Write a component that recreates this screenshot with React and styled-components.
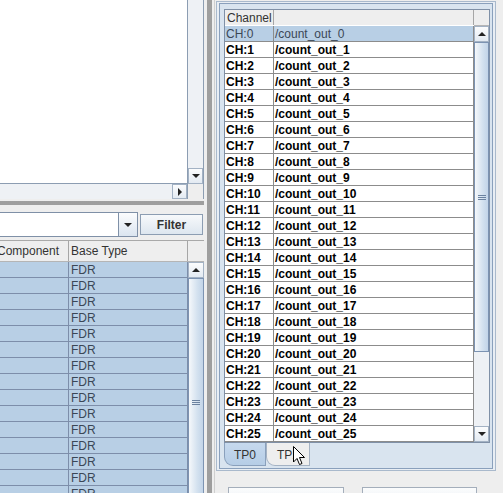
import React from "react";
import styled, { createGlobalStyle, css } from "styled-components";

const GlobalStyle = createGlobalStyle`
  html, body { margin: 0; padding: 0; background: #eeeeee; }
  body { font-family: "Liberation Sans", Arial, sans-serif; font-size: 12px; }
  * { box-sizing: border-box; }
`;

const Screen = styled.div`
  position: relative;
  width: 503px;
  height: 493px;
  overflow: hidden;
  display: flex;
  background: #eeeeee;
  color: #333;
`;

/* ---------- scrollbars ---------- */

const Triangle = styled.span`
  width: 0;
  height: 0;
  ${({ dir }) =>
    dir === "up" &&
    css`
      border-left: 4px solid transparent;
      border-right: 4px solid transparent;
      border-bottom: 4px solid #222;
    `}
  ${({ dir }) =>
    dir === "down" &&
    css`
      border-left: 4px solid transparent;
      border-right: 4px solid transparent;
      border-top: 4px solid #222;
    `}
  ${({ dir }) =>
    dir === "right" &&
    css`
      border-top: 4px solid transparent;
      border-bottom: 4px solid transparent;
      border-left: 4px solid #222;
    `}
`;

const ArrowButton = styled.div`
  flex: none;
  width: ${({ w }) => w || 15}px;
  height: ${({ h }) => h || 16}px;
  display: flex;
  align-items: center;
  justify-content: center;
  background: linear-gradient(#fbfcfd, #e3eaf2);
  border: 1px solid #a3b2c4;
`;

const Track = styled.div`
  flex: 1;
  position: relative;
  overflow: hidden;
  background: #eef1f5;
`;

const Thumb = styled.div`
  position: absolute;
  left: 0;
  right: 0;
  top: 0;
  height: ${({ h }) => h}px;
  display: flex;
  align-items: center;
  justify-content: center;
  background: linear-gradient(90deg, #f5f8fb, #d3e1ef 60%, #c2d4e8);
  border: 1px solid #7c93b2;
`;

const Grip = styled.span`
  width: 8px;
  height: 5px;
  border-top: 1px solid #6b82a0;
  border-bottom: 1px solid #6b82a0;
  position: relative;
  &::after {
    content: "";
    position: absolute;
    left: 0;
    right: 0;
    top: 1px;
    border-top: 1px solid #6b82a0;
  }
`;

const VBar = styled.div`
  width: ${({ w }) => w || 15}px;
  display: flex;
  flex-direction: column;
  background: #eeeeee;
`;

const HeaderCorner = styled.div`
  flex: none;
  height: ${({ h }) => h}px;
  background: #eeeeee;
  border-bottom: 1px solid #b5b5b5;
`;

/* ---------- left column ---------- */

const LeftColumn = styled.div`
  width: 204px;
  flex: none;
  display: flex;
  flex-direction: column;
`;

const TopScroll = styled.div`
  height: 199px;
  flex: none;
  display: grid;
  grid-template-columns: 188px 16px;
  grid-template-rows: 184px 15px;
  border-bottom: 1px solid #8c9db2;
`;

const Viewport = styled.div`
  background: #ffffff;
  border-right: 1px solid #8c9db2;
  border-bottom: 1px solid #8c9db2;
`;

const VScroll = styled.div`
  display: flex;
  flex-direction: column;
  background: #eeeeee;
  border-right: 1px solid #8c9db2;
`;

const HScroll = styled.div`
  display: flex;
  background: #eeeeee;
  border-right: 1px solid #8c9db2;
`;

const Corner = styled.div`
  background: #eeeeee;
  border-right: 1px solid #8c9db2;
`;

const dots = css`
  background-image: radial-gradient(circle, #9c9c9c 0.7px, transparent 1px);
  background-size: 2px 2px;
`;

const HDivider = styled.div`
  height: 11px;
  flex: none;
  padding: 2px 0 0;
  &::before {
    content: "";
    display: block;
    height: 4px;
    ${dots}
  }
`;

const VDivider = styled.div`
  width: 10px;
  flex: none;
  display: flex;
  justify-content: center;
  &::before {
    content: "";
    display: block;
    width: 5px;
    height: 100%;
    ${dots}
  }
`;

const FilterRow = styled.div`
  height: 30px;
  flex: none;
  display: flex;
  align-items: flex-start;
  padding-top: 2px;
`;

const ComboField = styled.div`
  width: 118px;
  height: 25px;
  background: #ffffff;
  border: 1px solid #7f90a7;
  border-left: none;
  border-right: none;
`;

const ComboButton = styled.div`
  width: 20px;
  height: 25px;
  display: flex;
  align-items: center;
  justify-content: center;
  border: 1px solid #7f90a7;
  background: linear-gradient(#fbfcfd, #dbe5f0);
`;

const FilterButton = styled.div`
  margin: 2px 0 0 2px;
  width: 63px;
  height: 21px;
  display: flex;
  align-items: center;
  justify-content: center;
  font-weight: bold;
  font-size: 12px;
  color: #333;
  border: 1px solid #8c9db2;
  background: linear-gradient(#f7f9fb, #dde6ef);
`;

const LeftTable = styled.div`
  flex: 1;
  display: flex;
  overflow: hidden;
  border-top: 1px solid #a9a9a9;
`;

const TableView = styled.div`
  flex: 1;
  overflow: hidden;
`;

const TableInner = styled.div`
  margin-left: ${({ shift }) => shift || 0}px;
`;

const HeaderRow = styled.div`
  display: flex;
  height: ${({ h }) => h}px;
  background: #eeeeee;
  border-bottom: 1px solid ${({ line }) => line || "#b5b5b5"};
`;

const HeaderCell = styled.div`
  width: ${({ w }) => w}px;
  flex: none;
  display: flex;
  align-items: center;
  padding-left: 2px;
  font-size: 12px;
  color: #333;
  border-right: 1px solid #a6a6a6;
  ${({ fill }) => fill && "flex: 1;"}
`;

const Row = styled.div`
  display: flex;
  height: 16px;
  background: ${({ selected }) => (selected ? "#b8cfe5" : "#ffffff")};
  border-bottom: 1px solid ${({ line }) => line};
`;

const Cell = styled.div`
  width: ${({ w }) => w}px;
  flex: none;
  display: flex;
  align-items: center;
  padding-left: ${({ pad }) => pad || 1}px;
  border-right: 1px solid ${({ line }) => line};
  font-size: 12px;
  white-space: nowrap;
  overflow: hidden;
  font-weight: ${({ bold }) => (bold ? "bold" : "normal")};
  color: ${({ bold }) => (bold ? "#000" : "#3b4756")};
  ${({ fill }) => fill && "flex: 1;"}
`;

/* ---------- right column ---------- */

const RightColumn = styled.div`
  width: 289px;
  flex: none;
  display: flex;
  flex-direction: column;
  border-left: 1px solid #cfcfcf;
`;

const Frame = styled.div`
  margin: 1px 0 0 1px;
  width: 280px;
  padding: 1px 2px 1px 2px;
  border: 1px solid #a9b9cc;
  background: #e9eef4;
`;

const TabPane = styled.div`
  display: flex;
  flex-direction: column;
  padding: 5px 2px 0 4px;
  border: 1px solid #8aa0bc;
  background: #d9e4ef;
`;

const ScrollPane = styled.div`
  height: 434px;
  display: flex;
  border: 1px solid #7f90a7;
  background: #ffffff;
`;

const TabRow = styled.div`
  height: 25px;
  display: flex;
  align-items: flex-start;
`;

const Tab = styled.div`
  width: ${({ w }) => w}px;
  height: 23px;
  display: flex;
  align-items: center;
  justify-content: center;
  padding-top: 1px;
  font-size: 12px;
  color: #333;
  border: 1px solid ${({ selected }) => (selected ? "#8aa0bc" : "#a5b3c4")};
  border-top: none;
  border-bottom-left-radius: 9px;
  background: ${({ selected }) =>
    selected ? "linear-gradient(#c6d9ee, #b6cde6)" : "#eeeeee"};
`;

const ButtonRow = styled.div`
  display: flex;
  gap: 18px;
  padding: 16px 0 0 13px;
`;

const BottomButton = styled.div`
  width: ${({ w }) => w}px;
  height: 24px;
  border: 1px solid #a4aebb;
  background: linear-gradient(#fbfcfd, #e6ecf2);
`;

const Cursor = styled.svg`
  position: absolute;
  left: 293px;
  top: 446px;
`;

const leftRows = Array.from({ length: 15 });
const channels = Array.from({ length: 26 }, (_, i) => i);

export default function App() {
  return (
    <>
      <GlobalStyle />
      <Screen>
        <LeftColumn>
          <TopScroll>
            <Viewport />
            <VScroll>
              <Track />
              <ArrowButton w={15} h={16}>
                <Triangle dir="down" />
              </ArrowButton>
            </VScroll>
            <HScroll>
              <Track />
              <ArrowButton w={15} h={15}>
                <Triangle dir="right" />
              </ArrowButton>
            </HScroll>
            <Corner />
          </TopScroll>
          <HDivider />
          <FilterRow>
            <ComboField />
            <ComboButton>
              <Triangle dir="down" />
            </ComboButton>
            <FilterButton>Filter</FilterButton>
          </FilterRow>
          <LeftTable>
            <TableView>
              <TableInner shift={-5}>
                <HeaderRow h={21}>
                  <HeaderCell w={74}>Component</HeaderCell>
                  <HeaderCell fill>Base Type</HeaderCell>
                </HeaderRow>
                {leftRows.map((_, i) => (
                  <Row key={i} selected line="#7d8eaa">
                    <Cell w={74} line="#7d8eaa" />
                    <Cell fill line="#7d8eaa" pad={2}>
                      FDR
                    </Cell>
                  </Row>
                ))}
              </TableInner>
            </TableView>
            <VBar w={16}>
              <HeaderCorner h={21} />
              <ArrowButton w={16} h={16}>
                <Triangle dir="up" />
              </ArrowButton>
              <Track>
                <Thumb h={248}>
                  <Grip />
                </Thumb>
              </Track>
            </VBar>
          </LeftTable>
        </LeftColumn>

        <VDivider />

        <RightColumn>
          <Frame>
            <TabPane>
              <ScrollPane>
                <TableView>
                  <HeaderRow h={16} line="#ffffff">
                    <HeaderCell w={49}>Channel</HeaderCell>
                    <HeaderCell w={200} />
                  </HeaderRow>
                  {channels.map((n) => (
                    <Row key={n} selected={n === 0} line="#8c8c8c">
                      <Cell w={49} line="#8c8c8c" bold={n !== 0}>
                        CH:{n}
                      </Cell>
                      <Cell w={200} line="#8c8c8c" bold={n !== 0}>
                        /count_out_{n}
                      </Cell>
                    </Row>
                  ))}
                </TableView>
                <VBar w={15}>
                  <HeaderCorner h={16} />
                  <ArrowButton w={15} h={16}>
                    <Triangle dir="up" />
                  </ArrowButton>
                  <Track>
                    <Thumb h={310}>
                      <Grip />
                    </Thumb>
                  </Track>
                  <ArrowButton w={15} h={16}>
                    <Triangle dir="down" />
                  </ArrowButton>
                </VBar>
              </ScrollPane>
              <TabRow>
                <Tab w={42} selected>
                  TP0
                </Tab>
                <Tab w={44}>TP1</Tab>
              </TabRow>
            </TabPane>
          </Frame>
          <ButtonRow>
            <BottomButton w={116} />
            <BottomButton w={115} />
          </ButtonRow>
        </RightColumn>

        <Cursor width="13" height="20" viewBox="0 0 13 20">
          <path
            d="M0.5 0.5 L0.5 16 L4 12.5 L6.5 18.5 L9 17.5 L6.5 11.5 L11.5 11.5 Z"
            fill="#ffffff"
            stroke="#000000"
            strokeWidth="1"
            strokeLinejoin="round"
          />
        </Cursor>
      </Screen>
    </>
  );
}
